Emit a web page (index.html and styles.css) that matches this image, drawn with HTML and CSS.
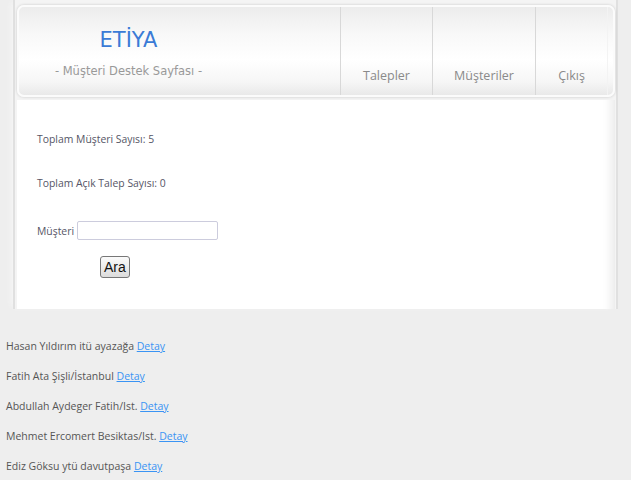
FILE: index.html
```html
<!DOCTYPE html>
<html lang="tr">
<head>
<meta charset="utf-8">
<title>ETİYA</title>
<link rel="stylesheet" href="styles.css">
</head>
<body>
<div class="wrap">
  <div class="header">
    <div class="brand">
      <div class="logo">ETİYA</div>
      <div class="tagline">- Müşteri Destek Sayfası -</div>
    </div>
    <div class="nav">
      <a class="nav-item nav-talep">Talepler</a>
      <a class="nav-item nav-mus">Müşteriler</a>
      <a class="nav-item nav-cikis">Çıkış</a>
    </div>
  </div>
  <div class="content">
    <p class="stat">Toplam Müşteri Sayısı: 5</p>
    <p class="stat">Toplam Açık Talep Sayısı: 0</p>
    <div class="search">
      <label class="search-label">Müşteri</label>
      <input class="search-input" type="text">
    </div>
    <button class="btn">Ara</button>
  </div>
</div>
<div class="list">
  <p class="row">Hasan Yıldırım itü ayazağa <a class="link" href="#">Detay</a></p>
  <p class="row">Fatih Ata Şişli/İstanbul <a class="link" href="#">Detay</a></p>
  <p class="row">Abdullah Aydeger Fatih/Ist. <a class="link" href="#">Detay</a></p>
  <p class="row">Mehmet Ercomert Besiktas/Ist. <a class="link" href="#">Detay</a></p>
  <p class="row">Ediz Göksu ytü davutpaşa <a class="link" href="#">Detay</a></p>
</div>
</body>
</html>
```
FILE: styles.css
```css
html, body {
  margin: 0;
  padding: 0;
}
body {
  background: #eeeeee;
  font-family: "Open Sans", "DejaVu Sans", sans-serif;
  font-size: 11px;
  color: #555;
}
.wrap {
  margin: 0 13px 0 13px;
  background: #f4f4f4;
  border-left: 2px solid #e0e0e0;
  border-right: 2px solid #e0e0e0;
  padding: 5px 1px 0 2px;
  box-shadow: -4px 0 6px -3px #f8f8f8;
}
.header {
  display: flex;
  height: 88px;
  border: 2px solid #fbfbfb;
  border-radius: 7px;
  background: linear-gradient(#ececec 0%, #f8f8f8 30%, #ffffff 60%, #f6f6f6 85%, #e9e9e9 100%);
  box-shadow: 0 0 3px rgba(0,0,0,0.18);
}
.brand {
  width: 219px;
  margin-right: 102px;
  text-align: center;
}
.logo {
  margin-top: 21px;
  font-family: "DejaVu Sans", sans-serif;
  font-size: 21px;
  color: #3b7bd6;
}
.tagline {
  margin-top: 12px;
  font-family: "DejaVu Sans", sans-serif;
  font-size: 11.5px;
  color: #999;
}
.nav {
  display: flex;
  flex: 1;
}
.nav-item {
  display: flex;
  align-items: flex-end;
  justify-content: center;
  padding-bottom: 11px;
  border-left: 1px solid #d8d8d8;
  font-size: 12.5px;
  color: #8a8a8a;
}
.nav-talep { width: 91px; }
.nav-mus { width: 102px; }
.nav-cikis { width: 71px; border-right: 1px solid #f3f3f3; }
.content {
  margin-top: 3px;
  height: 208px;
  background: #fff;
  padding: 1px 20px 0 20px;
  box-shadow: inset -14px 0 10px -10px #eaeaea;
}
.stat {
  margin: 31px 0 0 0;
  font-size: 10.4px;
  color: #556;
}
.stat + .stat {
  margin-top: 30px;
}
.search {
  display: flex;
  align-items: center;
  margin-top: 31px;
}
.search-label {
  font-size: 10.4px;
  color: #556;
  margin-right: 3px;
}
.search-input {
  width: 139px;
  height: 17px;
  padding: 0;
  border: 1px solid #ccd;
  border-radius: 2px;
}
.btn {
  display: block;
  margin: 16px 0 0 63px;
  padding: 2px 3px;
  font-family: "Liberation Sans", Arial, sans-serif;
  font-size: 14px;
  color: #111;
  background: linear-gradient(#fbfbfb, #dcdcdc);
  border: 1px solid #777;
  border-radius: 3px;
}
.list {
  padding: 31px 0 0 6px;
}
.row {
  margin: 0 0 17px 0;
  font-size: 10.5px;
  color: #555;
  line-height: 13px;
}
.link {
  color: #3a94f4;
  text-decoration: underline;
}
```
